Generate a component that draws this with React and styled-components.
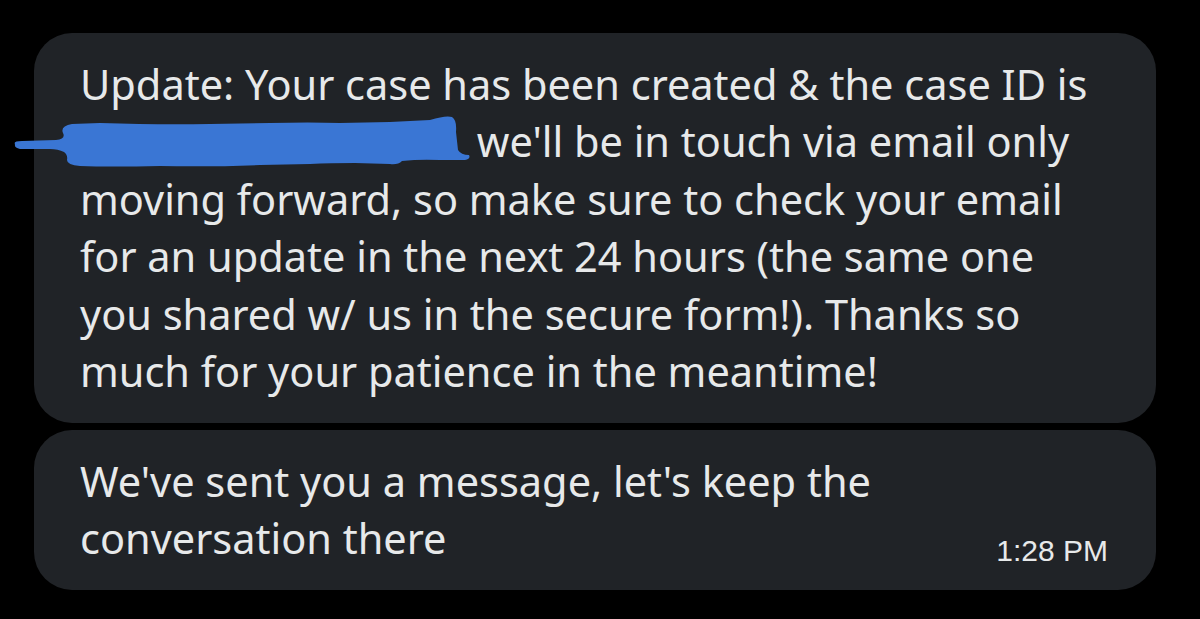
import React from "react";
import styled, { createGlobalStyle } from "styled-components";

const GlobalStyle = createGlobalStyle`
  html, body {
    margin: 0;
    background: #000;
  }
  body {
    font-family: "Noto Sans", "Liberation Sans", sans-serif;
    -webkit-font-smoothing: antialiased;
  }
`;

// hand-drawn marker stroke hiding the case number
const Scribble = () => (
  <ScribbleSvg viewBox="0 0 460 60" width="460" height="60">
    <path
      fill="#3a76d4"
      d="M5 30 Q3 27 12 27 L46 26 Q56 25 53 19 Q50 12 62 10 L90 9 Q150 11 200 10 L260 9 Q300 8 330 9 L380 8 L420 6 Q436 1 442 3 Q447 6 446 18 L448 36 Q451 41 459 41 Q461 45 455 46 L430 46 Q410 45 392 47 Q388 51 380 50 L345 49 Q320 49 300 50 L250 51 Q200 53 150 52 Q100 53 70 52 Q57 51 57 46 Q58 41 54 38 Q48 35 40 35 L10 35 Q4 34 5 30 Z"
    />
  </ScribbleSvg>
);

export default function App() {
  return (
    <>
      <GlobalStyle />
      <Thread>
        <Bubble>
          <Text>
            Update: Your case has been created &amp; the case ID is
            <br />
            <Redacted>
              <Scribble />
            </Redacted>{" "}
            we'll be in touch via email only
            <br />
            moving forward, so make sure to check your email
            <br />
            for an update in the next 24 hours (the same one
            <br />
            you shared w/ us in the secure form!). Thanks so
            <br />
            much for your patience in the meantime!
          </Text>
        </Bubble>
        <Bubble>
          <Text>
            We've sent you a message, let's keep the
            <br />
            conversation there
          </Text>
          <Time>1:28 PM</Time>
        </Bubble>
      </Thread>
    </>
  );
}

const Thread = styled.div`
  display: flex;
  flex-direction: column;
  gap: 7px;
  padding: 33px 44px 30px 34px;
`;

const Bubble = styled.div`
  background: #202327;
  border-radius: 38px;
  padding: 22.5px 48px 22.5px 46px;
  display: flex;
  justify-content: space-between;
  align-items: flex-end;
`;

const Text = styled.p`
  margin: 0;
  color: #e7e9ea;
  font-size: 41.5px;
  line-height: 57.5px;
  white-space: nowrap;
`;

const Redacted = styled.span`
  display: inline-block;
  position: relative;
  width: 386px;
  height: 1em;
`;

const ScribbleSvg = styled.svg`
  position: absolute;
  left: -70px;
  top: -2px;
`;

const Time = styled.span`
  color: #e7e9ea;
  font-family: "Liberation Sans", Arial, sans-serif;
  font-size: 30px;
  line-height: 30px;
  margin-bottom: 1.5px;
`;
